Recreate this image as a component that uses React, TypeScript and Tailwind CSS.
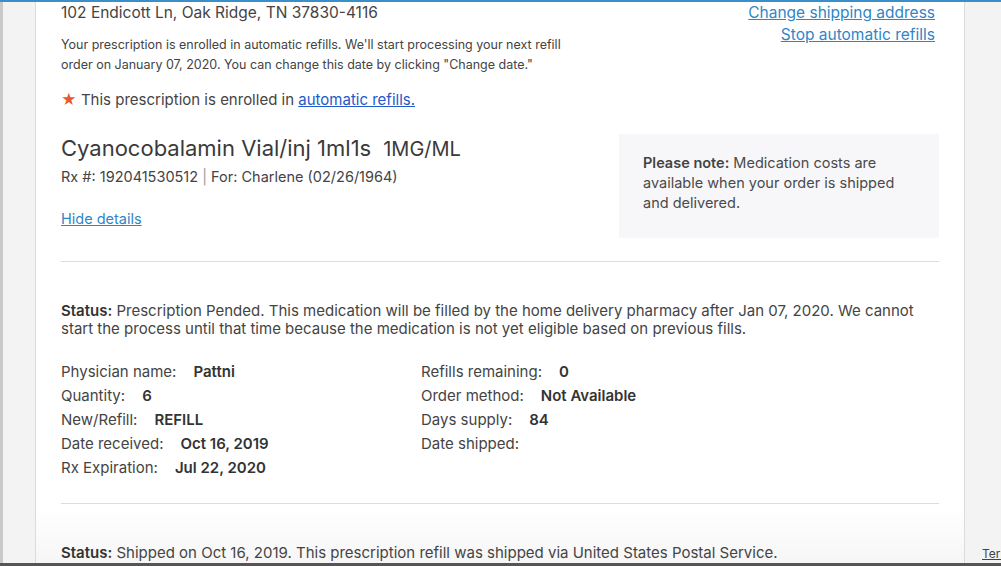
import React from 'react';

const font = { fontFamily: 'Inter, "Open Sans", sans-serif' };

const leftRows = [
  { label: 'Physician name:', value: 'Pattni' },
  { label: 'Quantity:', value: '6' },
  { label: 'New/Refill:', value: 'REFILL' },
  { label: 'Date received:', value: 'Oct 16, 2019' },
  { label: 'Rx Expiration:', value: 'Jul 22, 2020' },
];

const rightRows = [
  { label: 'Refills remaining:', value: '0' },
  { label: 'Order method:', value: 'Not Available' },
  { label: 'Days supply:', value: '84' },
  { label: 'Date shipped:', value: '' },
];

const DetailRow = ({ label, value }: { label: string; value: string }) => (
  <div className="h-6 flex items-center">
    <span>{label}</span>
    {value && <span className="ml-[17px] font-semibold text-[#333]">{value}</span>}
  </div>
);

export default function App() {
  return (
    <div
      className="relative w-[1001px] h-[566px] overflow-hidden bg-[#f3f3f3] text-[#444]"
      style={font}
    >
      <div className="h-[2px] bg-[#3a8fc8]" />
      <div className="flex h-[561px]">
        <div className="w-[3px] shrink-0 bg-[#c9c9c9]" />
        <div className="w-[32px] shrink-0" />
        <div className="w-[930px] shrink-0 border-x border-[#dcdcdc] bg-gradient-to-b from-white from-[90%] to-[#f6f6f6] px-[25px]">
          {/* top section */}
          <div className="flex justify-between">
            <div>
              <div className="text-[15.5px] leading-5 mt-[1px] text-[#444]">
                102 Endicott Ln, Oak Ridge, TN 37830-4116
              </div>
              <p className="mt-[12px] text-[12.5px] leading-5 w-[530px] text-[#444]">
                Your prescription is enrolled in automatic refills. We'll start processing your next refill order on
                January 07, 2020. You can change this date by clicking "Change date."
              </p>
              <div className="mt-[15px] text-[15px] leading-5">
                <span className="text-[#e8592c]">★</span> This prescription is enrolled in{' '}
                <a className="text-[#2359c9] underline">automatic refills.</a>
              </div>
            </div>
            <div className="flex flex-col items-end text-[15.5px] leading-[22px] text-[#2f86c6] pr-[4px]">
              <a className="underline">Change shipping address</a>
              <a className="underline">Stop automatic refills</a>
            </div>
          </div>

          {/* drug */}
          <div className="flex justify-between mt-[24px]">
            <div>
              <div className="flex items-baseline gap-3 text-[#3a3a3a]">
                <span className="text-[22px] leading-7">Cyanocobalamin Vial/inj 1ml1s</span>
                <span className="text-[20px] leading-7">1MG/ML</span>
              </div>
              <div className="text-[14.5px] leading-5 mt-[4px]">
                Rx #: 192041530512 <span className="text-[#999]">|</span> For: Charlene (02/26/1964)
              </div>
              <a className="block mt-[22px] text-[14.5px] leading-5 text-[#2f86c6] underline">Hide details</a>
            </div>
            <div className="w-[320px] h-[104px] bg-[#f7f7f9] px-6 pt-[19px] text-[14.5px] leading-5 text-[#4a4a4a]">
              <span className="font-semibold text-[#444]">Please note:</span> Medication costs are available when
              your order is shipped and delivered.
            </div>
          </div>

          <div className="h-px bg-[#dddddd] mt-[23px]" />

          {/* status */}
          <p className="mt-[40px] text-[15px] leading-[18px] pr-2">
            <span className="font-semibold text-[#333]">Status:</span> Prescription Pended. This medication will be
            filled by the home delivery pharmacy after Jan 07, 2020. We cannot start the process until that time because
            the medication is not yet eligible based on previous fills.
          </p>

          <div className="grid grid-cols-[360px_1fr] mt-[22px] text-[15px]">
            <div>
              {leftRows.map((r) => (
                <DetailRow key={r.label} {...r} />
              ))}
            </div>
            <div>
              {rightRows.map((r) => (
                <DetailRow key={r.label} {...r} />
              ))}
            </div>
          </div>

          <div className="h-px bg-[#dddddd] mt-[23px]" />

          <p className="mt-[40px] text-[15px] leading-[18px]">
            <span className="font-semibold text-[#333]">Status:</span> Shipped on Oct 16, 2019. This prescription
            refill was shipped via United States Postal Service.
          </p>
        </div>
        <div className="flex-1 min-w-0 overflow-hidden flex flex-col justify-end">
          <a className="ml-[17px] text-[12px] leading-4 text-[#444] underline mb-[1px] whitespace-nowrap">Terms</a>
        </div>
      </div>
      <div className="h-[3px] bg-[#555]" />
    </div>
  );
}
